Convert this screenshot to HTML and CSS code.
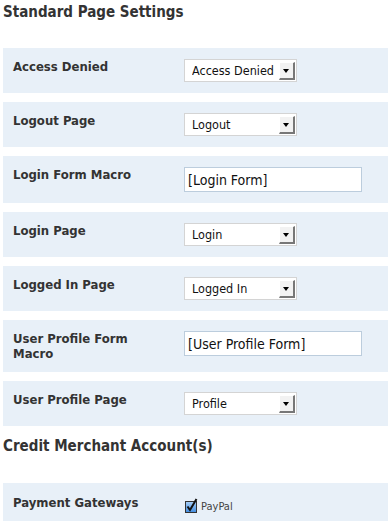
FILE: index.html
```html
<!DOCTYPE html>
<html lang="en">
<head>
  <meta charset="UTF-8">
  <title>Standard Page Settings</title>
  <link rel="stylesheet" href="styles.css">
</head>
<body>
<div class="settings">
  <h3>Standard Page Settings</h3>

  <div class="row">
    <label class="label">Access Denied</label>
    <div class="field">
      <div class="select"><span>Access Denied</span><i class="arrow"></i></div>
    </div>
  </div>

  <div class="row">
    <label class="label">Logout Page</label>
    <div class="field">
      <div class="select"><span>Logout</span><i class="arrow"></i></div>
    </div>
  </div>

  <div class="row">
    <label class="label">Login Form Macro</label>
    <div class="field">
      <input type="text" class="text" value="[Login Form]">
    </div>
  </div>

  <div class="row">
    <label class="label">Login Page</label>
    <div class="field">
      <div class="select"><span>Login</span><i class="arrow"></i></div>
    </div>
  </div>

  <div class="row">
    <label class="label">Logged In Page</label>
    <div class="field">
      <div class="select"><span>Logged In</span><i class="arrow"></i></div>
    </div>
  </div>

  <div class="row">
    <label class="label">User Profile Form Macro</label>
    <div class="field">
      <input type="text" class="text" value="[User Profile Form]">
    </div>
  </div>

  <div class="row">
    <label class="label">User Profile Page</label>
    <div class="field">
      <div class="select"><span>Profile</span><i class="arrow"></i></div>
    </div>
  </div>

  <h3 class="second">Credit Merchant Account(s)</h3>

  <div class="row gateway">
    <label class="label">Payment Gateways</label>
    <div class="field check">
      <svg width="13" height="15" viewBox="0 0 13 15">
        <defs>
          <linearGradient id="cb" x1="0" y1="0" x2="0" y2="1">
            <stop offset="0" stop-color="#a9d0f7"/>
            <stop offset="1" stop-color="#3f8be0"/>
          </linearGradient>
        </defs>
        <rect x="0.5" y="3.5" width="11" height="11" fill="url(#cb)" stroke="#333"/>
        <path d="M2.5 8.5 L5 12 L11.5 1" fill="none" stroke="#111" stroke-width="2"/>
      </svg>
      <span class="paypal">PayPal</span>
    </div>
  </div>
</div>
</body>
</html>
```

FILE: styles.css
```css
body {
  margin: 0;
  padding: 0 1px 0 3px;
  font-family: "DejaVu Sans Condensed", "DejaVu Sans", Verdana, sans-serif;
  font-stretch: condensed;
  color: #333;
  background: #fff;
}
h3 {
  font-size: 15px;
  font-weight: bold;
  margin: 0;
  padding-top: 3px;
  height: 45px;
  line-height: 18px;
}
h3.second {
  margin-top: -2px;
  padding-top: 4px;
  height: 46px;
}
.row {
  display: flex;
  align-items: flex-start;
  background: #e8f0f8;
  padding: 11px 0 11px 10px;
  margin-bottom: 9px;
}
.row.tall {
  padding-bottom: 10px;
}
.label {
  width: 171px;
  font-size: 13px;
  font-weight: bold;
  line-height: 15px;
  padding-right: 20px;
  box-sizing: border-box;
}
.field {
  flex: 1;
}
.select {
  width: 113px;
  height: 23px;
  box-sizing: border-box;
  border: 1px solid #d4d4d4;
  background: #fff;
  display: flex;
  align-items: center;
  font-size: 12.5px;
  color: #111;
  padding-left: 7px;
  white-space: nowrap;
}
.select span {
  flex: 1;
  overflow: hidden;
}
.arrow {
  width: 16px;
  height: 18px;
  margin-right: 1px;
  box-sizing: border-box;
  background: #f2f2f2;
  border-right: 2px solid #777;
  border-bottom: 2px solid #777;
  border-left: 1px solid #fff;
  border-top: 1px solid #fff;
  position: relative;
}
.arrow::after {
  content: "";
  position: absolute;
  left: 3px;
  top: 6px;
  border-left: 3.5px solid transparent;
  border-right: 3.5px solid transparent;
  border-top: 4px solid #000;
}
.text {
  width: 178px;
  height: 25px;
  box-sizing: border-box;
  margin: 0;
  border: 1px solid #bccddd;
  background: #fff;
  font-family: "DejaVu Sans Condensed", "DejaVu Sans", Verdana, sans-serif;
  font-stretch: condensed;
  font-size: 14px;
  color: #111;
  padding: 0 3px;
}
.gateway {
  padding-top: 12px;
}
.check {
  display: flex;
  align-items: flex-end;
  padding-top: 3px;
}
.check svg {
  margin-left: 1px;
}
.paypal {
  font-size: 11px;
  color: #444;
  margin-left: 3px;
  line-height: 12px;
}
```
